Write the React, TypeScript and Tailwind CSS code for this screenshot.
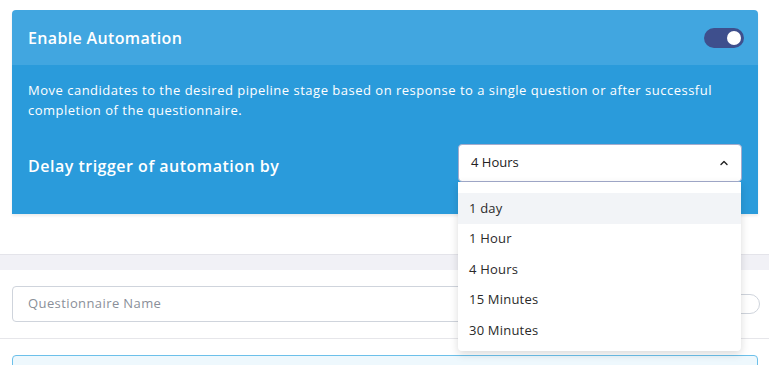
import React from "react";

export default function App() {
  const options = ["1 day", "1 Hour", "4 Hours", "15 Minutes", "30 Minutes"];
  return (
    <div
      className="w-[769px] h-[365px] bg-white overflow-hidden relative"
      style={{ fontFamily: '"Open Sans", "Noto Sans", sans-serif' }}
    >
      <div className="pt-[10px] px-[12px] w-[770px]">
        <div className="w-[746px] rounded-t-[4px] overflow-visible shadow-[0_2px_3px_rgba(0,0,0,0.08)]">
          <div className="h-[55px] bg-[#41a6e0] rounded-t-[4px] flex items-center justify-between pl-[16px] pr-[14px]">
            <span className="text-white text-[16px] font-semibold tracking-[0.35px]">Enable Automation</span>
            <div className="w-[40px] h-[20px] rounded-full bg-[#3e4f8d] flex items-center justify-end pr-[3px]">
              <div className="w-[14px] h-[14px] rounded-full bg-white" />
            </div>
          </div>
          <div className="bg-[#2a9bdb] h-[149px] pl-[16px] pr-[16px] pt-[15px]">
            <p className="text-white text-[13px] leading-[20px] tracking-[0.5px]">
              Move candidates to the desired pipeline stage based on response to a single question or after successful completion of the questionnaire.
            </p>
            <div className="flex items-center justify-between mt-[24px]">
              <span className="text-white text-[16px] font-semibold tracking-[0.5px] pt-[6px]">Delay trigger of automation by</span>
              <div className="relative w-[284px] mr-[0px]">
                <div className="h-[38px] bg-white border border-[#a3abcc] rounded-[4px] flex items-center justify-between pl-[12px] pr-[12px]">
                  <span className="text-[13px] text-[#222]">4 Hours</span>
                  <svg width="10" height="10" viewBox="0 0 10 10" fill="none">
                    <path d="M2 6.5 L5 3.5 L8 6.5" stroke="#222" strokeWidth="1.4" strokeLinecap="round" strokeLinejoin="round" />
                  </svg>
                </div>
                <div className="absolute left-0 top-[38px] w-[283px] bg-white rounded-b-[4px] shadow-[0_3px_8px_rgba(0,0,0,0.15)] pt-[11px] pb-[5px] z-10">
                  {options.map((o, i) => (
                    <div
                      key={o}
                      className={
                        "h-[30.5px] flex items-center pl-[11px] text-[13px] text-[#2a2a2a] tracking-[0.2px] " +
                        (i === 0 ? "bg-[#f2f4f7]" : "")
                      }
                    >
                      {o}
                    </div>
                  ))}
                </div>
              </div>
            </div>
          </div>
        </div>
      </div>
      <div className="mt-[40px] border-t border-[#e4e4ea] h-[16px] bg-[#f1f1f6]" />
      <div className="px-[12px] pt-[16px] flex items-center gap-[20px] pr-[9px]">
        <div className="flex-1 h-[36px] border border-[#cfd4dc] rounded-[4px] flex items-center pl-[15px]">
          <span className="text-[13px] text-[#8a8f99] tracking-[0.4px]">Questionnaire Name</span>
        </div>
        <div className="w-[40px] h-[20px] rounded-full border border-[#cfd4dc] bg-white" />
      </div>
      <div className="mt-[16px] border-t border-[#e6e6ea]" />
      <div className="px-[12px] pt-[16px]">
        <div className="w-[746px] h-[40px] border border-[#6cc0ea] bg-[#eef8fd] rounded-[4px]" />
      </div>
    </div>
  );
}
